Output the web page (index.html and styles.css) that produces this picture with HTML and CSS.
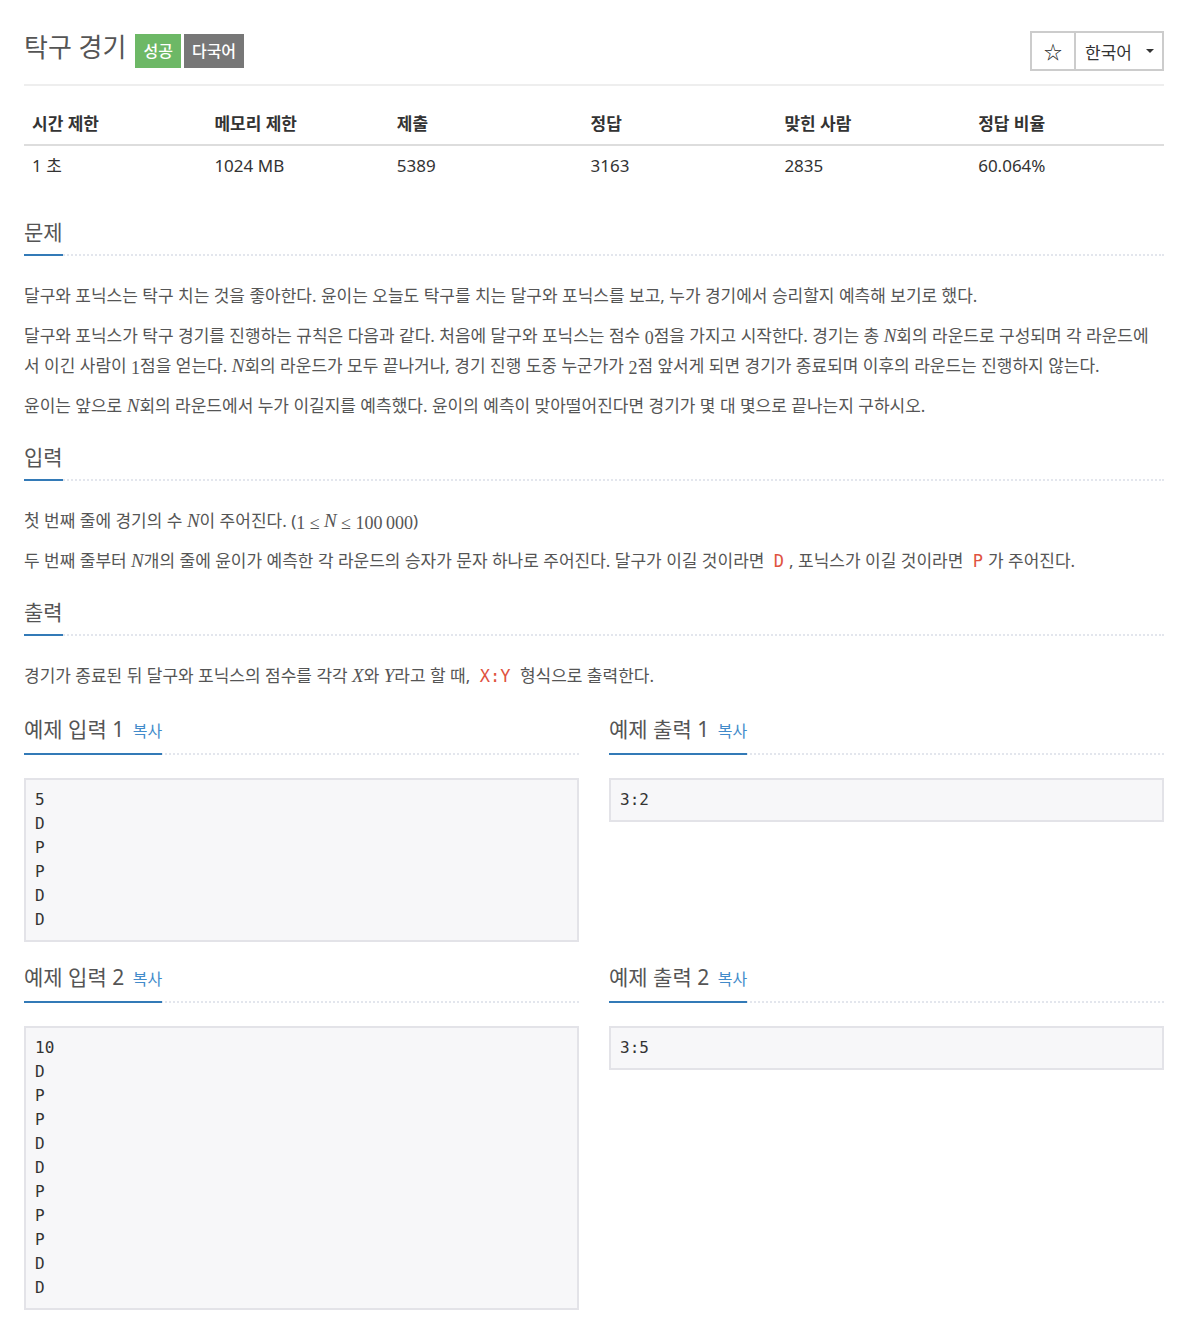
FILE: index.html
```html
<!DOCTYPE html>
<html>
<head>
    <title>탁구 경기</title>
    <link rel="stylesheet" href="styles.css">
</head>
<body>
    <div class="container">
        <div class="page-header">
            <div class="title-row">
                <h1>탁구 경기</h1>
                <span class="badge badge-success">성공</span>
                <span class="badge badge-gray">다국어</span>
            </div>
            <div class="btn-group">
                <div class="btn star">&#9734;</div>
                <div class="btn lang">한국어 <span class="caret"></span></div>
            </div>
        </div>

        <table class="info">
            <thead>
                <tr>
                    <th>시간 제한</th>
                    <th>메모리 제한</th>
                    <th>제출</th>
                    <th>정답</th>
                    <th>맞힌 사람</th>
                    <th>정답 비율</th>
                </tr>
            </thead>
            <tbody>
                <tr>
                    <td>1 초</td>
                    <td>1024 MB</td>
                    <td>5389</td>
                    <td>3163</td>
                    <td>2835</td>
                    <td>60.064%</td>
                </tr>
            </tbody>
        </table>

        <section class="section">
            <div class="headline"><h2>문제</h2></div>
            <p>달구와 포닉스는 탁구 치는 것을 좋아한다. 윤이는 오늘도 탁구를 치는 달구와 포닉스를 보고, 누가 경기에서 승리할지 예측해 보기로 했다.</p>
            <p>달구와 포닉스가 탁구 경기를 진행하는 규칙은 다음과 같다. 처음에 달구와 포닉스는 점수 <span class="mn">0</span>점을 가지고 시작한다. 경기는 총 <span class="mi">N</span>회의 라운드로 구성되며 각 라운드에서 이긴 사람이 <span class="mn">1</span>점을 얻는다. <span class="mi">N</span>회의 라운드가 모두 끝나거나, 경기 진행 도중 누군가가 <span class="mn">2</span>점 앞서게 되면 경기가 종료되며 이후의 라운드는 진행하지 않는다.</p>
            <p>윤이는 앞으로 <span class="mi">N</span>회의 라운드에서 누가 이길지를 예측했다. 윤이의 예측이 맞아떨어진다면 경기가 몇 대 몇으로 끝나는지 구하시오.</p>
        </section>

        <section class="section">
            <div class="headline"><h2>입력</h2></div>
            <p>첫 번째 줄에 경기의 수 <span class="mi">N</span>이 주어진다. (<span class="mn">1</span> <span class="mo">&le;</span> <span class="mi">N</span> <span class="mo">&le;</span> <span class="mn">100&#8201;000</span>)</p>
            <p>두 번째 줄부터 <span class="mi">N</span>개의 줄에 윤이가 예측한 각 라운드의 승자가 문자 하나로 주어진다. 달구가 이길 것이라면 <code>D</code>, 포닉스가 이길 것이라면 <code>P</code>가 주어진다.</p>
        </section>

        <section class="section">
            <div class="headline"><h2>출력</h2></div>
            <p>경기가 종료된 뒤 달구와 포닉스의 점수를 각각 <span class="mi">X</span>와 <span class="mi">Y</span>라고 할 때, <code>X:Y</code> 형식으로 출력한다.</p>
        </section>

        <div class="samples">
            <div class="sample">
                <div class="headline"><h2>예제 입력 1 <a class="copy">복사</a></h2></div>
                <pre>5
D
P
P
D
D</pre>
            </div>
            <div class="sample">
                <div class="headline"><h2>예제 출력 1 <a class="copy">복사</a></h2></div>
                <pre>3:2</pre>
            </div>
            <div class="sample">
                <div class="headline"><h2>예제 입력 2 <a class="copy">복사</a></h2></div>
                <pre>10
D
P
P
D
D
P
P
P
D
D</pre>
            </div>
            <div class="sample">
                <div class="headline"><h2>예제 출력 2 <a class="copy">복사</a></h2></div>
                <pre>3:5</pre>
            </div>
        </div>
    </div>
</body>
</html>
```

FILE: styles.css
```css
body {
    margin: 0;
    font-family: "Noto Sans", "Noto Sans CJK KR", sans-serif;
    font-size: 17px;
    color: #555;
    background: #fff;
}
.container {
    width: 1140px;
    margin-left: 24px;
}

/* header */
.page-header {
    display: flex;
    justify-content: space-between;
    align-items: center;
    padding: 30px 0 12px;
    border-bottom: 2px solid #eee;
}
.title-row {
    display: flex;
    align-items: center;
}
h1 {
    margin: 0 9px 8px 0;
    font-size: 26px;
    font-weight: 400;
    line-height: 34px;
    color: #555;
}
.badge {
    height: 34px;
    line-height: 34px;
    padding: 0 8px;
    margin-right: 3px;
    font-size: 16px;
    font-weight: 500;
    color: #fff;
}
.badge-success {
    background: #6db866;
}
.badge-gray {
    background: #777;
}
.btn-group {
    display: flex;
    height: 40px;
    box-sizing: border-box;
    border: 2px solid #ccc;
    color: #333;
}
.btn {
    display: flex;
    align-items: center;
}
.star {
    width: 44px;
    box-sizing: border-box;
    border-right: 2px solid #ccc;
    justify-content: center;
    font-family: "Noto Sans CJK KR", sans-serif;
    font-size: 18px;
    color: #222;
}
.lang {
    width: 86px;
    box-sizing: border-box;
    padding-left: 9px;
    font-size: 17px;
}
.caret {
    margin-left: 14px;
    border-top: 4px solid #333;
    border-left: 4px solid transparent;
    border-right: 4px solid transparent;
}

/* info table */
.info {
    width: 100%;
    margin-top: 20px;
    border-collapse: collapse;
    color: #333;
}
.info th, .info td {
    text-align: left;
    padding: 6px 8px 9px;
    line-height: 23px;
}
.info th {
    font-weight: 700;
    border-bottom: 2px solid #ddd;
    width: 17%;
}
.info th:nth-child(1), .info th:nth-child(2) {
    width: 16%;
}
.info td {
    padding-top: 8px;
}

/* sections */
.headline {
    display: flex;
    margin-top: 32px;
    border-bottom: 2px dotted #e3e6ed;
}
.headline h2 {
    margin: 0 0 -2px;
    padding-bottom: 8px;
    font-size: 21px;
    font-weight: 400;
    line-height: 28px;
    color: #555;
    border-bottom: 2px solid #337ab7;
}
.section + .section .headline {
    margin-top: 22px;
}
.section p {
    margin: 10px 0 0;
    line-height: 30px;
}
.section .headline + p {
    margin-top: 25px;
}
.mi {
    font-family: "Liberation Serif", serif;
    font-style: italic;
    font-size: 19px;
    line-height: 1;
}
.mn, .mo {
    font-family: "Liberation Serif", serif;
    font-size: 18px;
    line-height: 1;
    vertical-align: -2px;
}
code {
    font-family: "DejaVu Sans Mono", monospace;
    font-size: 17px;
    line-height: 1;
    color: #e0533f;
    padding: 0 5px;
}

/* samples */
.samples {
    display: grid;
    grid-template-columns: 1fr 1fr;
    column-gap: 30px;
}
.sample .headline {
    margin-top: 21px;
}
.sample:nth-child(-n+2) .headline {
    margin-top: 24px;
}
.copy {
    margin-left: 3px;
    font-size: 16px;
    color: #428bca;
}
pre {
    margin: 23px 0 0;
    padding: 8px 9px;
    border: 2px solid #e3e3e8;
    background: #f7f7f9;
    font-family: "DejaVu Sans Mono", monospace;
    font-size: 16px;
    line-height: 24px;
    color: #333;
}
```
